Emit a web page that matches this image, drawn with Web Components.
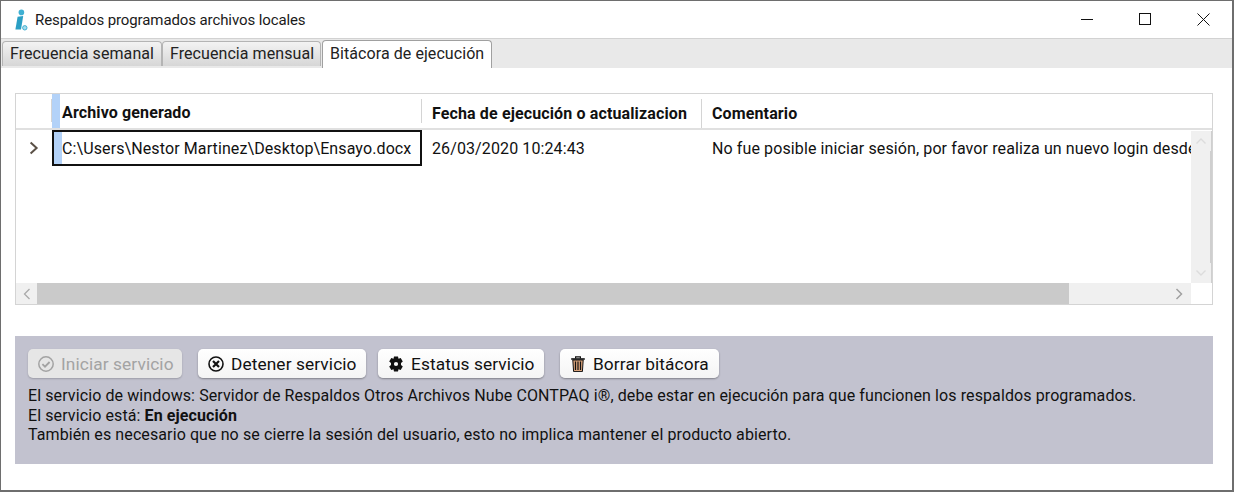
<!DOCTYPE html>
<html lang="es"><head><meta charset="utf-8"><title>Respaldos</title>
<style>
html,body{margin:0;padding:0;background:#fff;}
body{font-family:Roboto,"Liberation Sans",sans-serif;color:#000;width:1234px;height:492px;overflow:hidden;}
</style></head><body>
<app-window>
  <title-bar>Respaldos programados archivos locales</title-bar>
  <tab-strip>
    <tab-item style="width:160px">Frecuencia semanal</tab-item>
    <tab-item style="width:159px">Frecuencia mensual</tab-item>
    <tab-item active style="width:170px">Bitácora de ejecución</tab-item>
  </tab-strip>
  <log-grid></log-grid>
  <service-panel>
    <svc-button disabled icon="check" style="width:154px;margin-right:16px">Iniciar servicio</svc-button>
    <svc-button icon="stop" style="width:168px;margin-right:12px">Detener servicio</svc-button>
    <svc-button icon="gear" style="width:166px;margin-right:16px">Estatus servicio</svc-button>
    <svc-button icon="trash" style="width:159px">Borrar bitácora</svc-button>
    <div slot="text">El servicio de windows: Servidor de Respaldos Otros Archivos Nube CONTPAQ i®, debe estar en ejecución para que funcionen los respaldos programados.</div>
    <div slot="text">El servicio está: <b>En ejecución</b></div>
    <div slot="text">También es necesario que no se cierre la sesión del usuario, esto no implica mantener el producto abierto.</div>
  </service-panel>
</app-window>
<script>
function def(name, html, cls){
  const t=document.createElement('template');t.innerHTML=html;
  customElements.define(name, class extends HTMLElement{
    constructor(){super();this.attachShadow({mode:'open'}).appendChild(t.content.cloneNode(true));}
    connectedCallback(){cls&&cls.call(this);}
  });
}
def('app-window',`<style>:host{display:flex;flex-direction:column;box-sizing:border-box;width:1234px;height:492px;border:1px solid #6e6e6e;border-width:1px 2px 2px 1px;background:#fff;}</style><slot></slot>`);
def('title-bar',`<style>
:host{display:flex;align-items:center;height:37px;flex:none;font-size:15px;color:#1a1a1a;letter-spacing:-.1px}
.logo{width:16px;height:22px;margin-left:12px;margin-right:6px;flex:none}
.t{flex:1}
.c{display:flex;height:100%}
.c span{width:58px;display:flex;align-items:center;justify-content:center}
</style>
<svg class="logo" viewBox="0 0 16 22"><path d="M4.6 7.8l5.6-.8-2.2 13.4-5.6.2z" fill="#2a9fc4"/><circle cx="8.4" cy="3.4" r="2.8" fill="#3fb0d3"/><circle cx="11.8" cy="18.8" r="2.2" fill="#a5dcec" stroke="#3fb0d3" stroke-width="1"/></svg>
<span class="t"><slot></slot></span>
<div class="c">
<span><svg width="13" height="13" viewBox="0 0 13 13"><path d="M0 6.5h12" stroke="#111" fill="none"/></svg></span>
<span><svg width="13" height="13" viewBox="0 0 13 13"><rect x=".5" y=".5" width="11" height="11" stroke="#111" fill="none"/></svg></span>
<span><svg width="13" height="13" viewBox="0 0 13 13"><path d="M.5.5l12 12M12.5.5l-12 12" stroke="#111" fill="none"/></svg></span>
</div>`);
def('tab-strip',`<style>:host{display:flex;align-items:flex-end;height:30px;flex:none;box-sizing:border-box;background:#e9e9e9;border-top:1px solid #d2d2d2;padding-left:1px}</style><slot></slot>`);
def('tab-item',`<style>
:host{display:block;box-sizing:border-box;height:25px;margin-right:0;padding:0 0 0 7px;font-size:16px;line-height:23px;letter-spacing:.07px;color:#222;
background:linear-gradient(#f3f3f3,#d6d6d6);border:1px solid #b4b4b4;border-bottom:0;border-radius:4px 4px 0 0;margin-bottom:2px}
:host([active]){height:28px;line-height:26px;background:#fff;border-color:#a0a0a0;margin-bottom:0;margin-left:1px}
</style><slot></slot>`);
def('log-grid',`<style>
:host{display:grid;grid-template-rows:36px 1fr 21px;grid-template-columns:1fr 21px;box-sizing:border-box;height:212px;margin:25px 19px 0 14px;border:1px solid #d4d4d4;font-size:16px;color:#111;flex:none;letter-spacing:.11px}
.head,.row{display:grid;grid-template-columns:36px 370px 280px 1fr;min-width:0;overflow:hidden}
.head{grid-column:1/3;border-bottom:2px solid #e0e0e0;font-weight:700;letter-spacing:.13px}
.head div{display:flex;align-items:center;padding-left:10px;border-right:1px solid #d4d4d4;margin-top:5px;padding-top:2px;padding-bottom:3px;}
.head div:first-child{padding:0;border:0;margin:0}
.head .a{background:linear-gradient(90deg,#b3d2f8 8px,transparent 8px);margin-top:0;padding-top:3px;padding-bottom:0;position:relative;border-right:0}
.head .a::before{content:"";position:absolute;left:-1px;top:5px;bottom:6px;width:1px;background:#d4d4d4}
.head .a::after{content:"";position:absolute;right:0;top:5px;bottom:5px;width:1px;background:#d4d4d4}
.head .last{border:0}
.row{height:36px;align-items:stretch;white-space:nowrap}
.row>div{display:flex;align-items:center;padding-left:10px;overflow:hidden}
.row .chev{padding:0;justify-content:center}
.row .cur{box-sizing:border-box;border:2px solid #111;padding-left:8px;background:linear-gradient(90deg,#b3d2f8 8px,#fff 8px);background-origin:padding-box;background-clip:padding-box}
.v{grid-row:2;grid-column:2;background:#f0f0f0;display:flex;flex-direction:column;justify-content:space-between;align-items:center;border-right:2px solid #cfcfcf;margin-top:1px;box-sizing:border-box}
.b{display:flex;align-items:center;justify-content:center;height:20px;width:20px;background:#f0f0f0}
.h{grid-row:3;grid-column:1;background:#f0f0f0;display:flex}
.h .l{width:21px;display:flex;align-items:center;justify-content:center;flex:none}
.h .th{width:1032px;background:#cacaca;flex:none}
.h .r{flex:1;display:flex;align-items:center;justify-content:flex-end;padding-right:2px}
.corner{grid-row:3;grid-column:2}
.body{grid-row:2;grid-column:1;min-width:0;overflow:hidden}
</style>
<div class="head"><div></div><div class="a">Archivo generado</div><div>Fecha de ejecución o actualizacion</div><div class="last">Comentario</div></div>
<div class="body"><div class="row">
<div class="chev"><svg width="10" height="14" viewBox="0 0 10 14"><path d="M1.6 1.6L7.6 7l-6 5.4" fill="none" stroke="#5a5046" stroke-width="2"/></svg></div>
<div class="cur"><span>C:\\Users\\Nestor Martinez\\Desktop\\Ensayo.docx</span></div>
<div>26/03/2020 10:24:43</div>
<div>No fue posible iniciar sesión, por favor realiza un nuevo login desde</div>
</div></div>
<div class="v">
<div class="b"><svg width="12" height="8" viewBox="0 0 12 8"><path d="M1.5 6.5l4.5-4.5 4.5 4.5" fill="none" stroke="#dcdcdc" stroke-width="1.4"/></svg></div>
<div class="b"><svg width="12" height="8" viewBox="0 0 12 8"><path d="M1.5 1.5l4.5 4.5 4.5-4.5" fill="none" stroke="#dcdcdc" stroke-width="1.4"/></svg></div>
</div>
<div class="h"><div class="l"><svg width="8" height="12" viewBox="0 0 8 12"><path d="M6.5 1L1.5 6l5 5" fill="none" stroke="#aaa" stroke-width="1.3"/></svg></div><div class="th"></div>
<div class="r"><div class="b"><svg width="8" height="12" viewBox="0 0 8 12"><path d="M1.5 1l5 5-5 5" fill="none" stroke="#a0a0a0" stroke-width="1.5"/></svg></div></div></div>
<div class="corner"></div>`);
def('service-panel',`<style>
:host{display:block;box-sizing:border-box;height:128px;margin:31px 19px 0 14px;background:#c2c2cf;padding:13px 13px 0;font-size:16px;color:#111;flex:none;letter-spacing:.1px}
.btns{display:flex;height:29px;margin-bottom:8px}
.txt{line-height:19.5px}
</style><div class="btns"><slot></slot></div><div class="txt"><slot name="text"></slot></div>`);
const icons={
check:`<svg width="16" height="16" viewBox="0 0 16 16"><circle cx="8" cy="8" r="7.2" fill="none" stroke="#a3a3a3" stroke-width="1.5"/><path d="M4.4 8.1l2.6 2.600 4.600-4.700" fill="none" stroke="#a3a3a3" stroke-width="1.8"/></svg>`,
stop:`<svg width="16" height="16" viewBox="0 0 16 16"><circle cx="8" cy="8" r="7" fill="none" stroke="#111" stroke-width="1.6"/><path d="M5 5l6 6M11 5l-6 6" stroke="#111" stroke-width="2.2" fill="none"/></svg>`,
gear:`<svg width="16" height="16" viewBox="0 0 16 16"><path fill="#111" fill-rule="evenodd" d="M6 .4h4l.5 2.300 2.200-.8 2.100 3.500L13 7v2l1.800 1.600-2.100 3.500-2.200-.8-.5 2.300H6l-.5-2.300-2.200.8-2.100-3.500L3 9V7L1.200 5.400l2.100-3.500 2.200.8zM8 5.900a2.100 2.100 0 100 4.200 2.100 2.100 0 000-4.200z"/></svg>`,
trash:`<svg width="16" height="16" viewBox="0 0 16 16"><path d="M5.600 2.400V.9h4.800v1.500" fill="none" stroke="#111" stroke-width="1.200"/><path d="M1.200 3h13.600" stroke="#111" stroke-width="1.600"/><path d="M2.800 4h10.400l-.8 11.600H3.600z" fill="#d9a27a" stroke="#111" stroke-width="1"/><path d="M5.500 5.500v8.500M8 5.500v8.500M10.500 5.500v8.500" stroke="#111" stroke-width="1.200"/></svg>`};
def('svc-button',`<style>
:host{display:flex;align-items:center;box-sizing:border-box;height:29px;padding:0 0 0 10px;gap:7px;font-size:17.3px;background:linear-gradient(#fff,#f4f4f4);border-radius:5px;box-shadow:0 1px 2px rgba(0,0,0,.35);color:#111;white-space:nowrap;flex:none}
:host([disabled]){background:#e6e6e6;color:#a3a3a3;box-shadow:0 1px 2px rgba(0,0,0,.2)}
.i{display:flex;width:16px;height:16px;flex:none}
</style><span class="i"></span><slot></slot>`,function(){this.shadowRoot.querySelector('.i').innerHTML=icons[this.getAttribute('icon')];});
</script>
</body></html>
